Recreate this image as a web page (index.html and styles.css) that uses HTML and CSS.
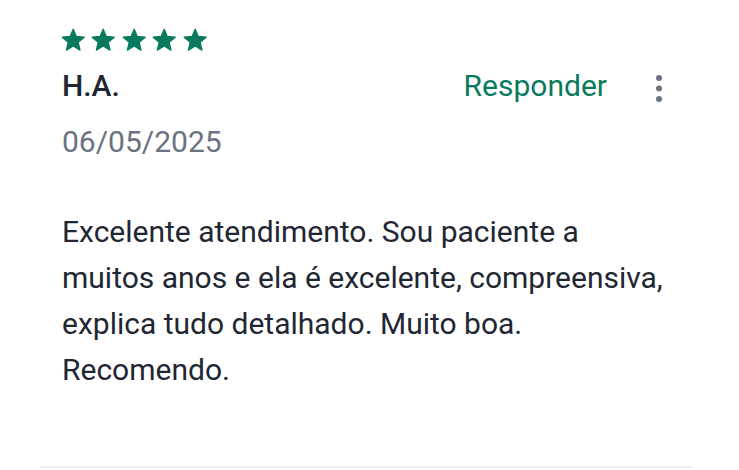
FILE: index.html
```html
<!DOCTYPE html>
<html lang="pt-BR">
  <head>
    <meta charset="UTF-8" />
    <meta name="viewport" content="width=device-width, initial-scale=1.0" />
    <title>Avaliação</title>
    <link rel="stylesheet" href="styles.css">
  </head>
  <body>
    <div class="review">
      <div class="stars">
        <svg class="star" viewBox="0 0 24 24"><path d="M12 17.27L18.18 21l-1.64-7.03L22 9.24l-7.19-.61L12 2 9.19 8.63 2 9.24l5.46 4.73L5.82 21z"/></svg>
        <svg class="star" viewBox="0 0 24 24"><path d="M12 17.27L18.18 21l-1.64-7.03L22 9.24l-7.19-.61L12 2 9.19 8.63 2 9.24l5.46 4.73L5.82 21z"/></svg>
        <svg class="star" viewBox="0 0 24 24"><path d="M12 17.27L18.18 21l-1.64-7.03L22 9.24l-7.19-.61L12 2 9.19 8.63 2 9.24l5.46 4.73L5.82 21z"/></svg>
        <svg class="star" viewBox="0 0 24 24"><path d="M12 17.27L18.18 21l-1.64-7.03L22 9.24l-7.19-.61L12 2 9.19 8.63 2 9.24l5.46 4.73L5.82 21z"/></svg>
        <svg class="star" viewBox="0 0 24 24"><path d="M12 17.27L18.18 21l-1.64-7.03L22 9.24l-7.19-.61L12 2 9.19 8.63 2 9.24l5.46 4.73L5.82 21z"/></svg>
      </div>

      <div class="head">
        <p class="name">H.A.</p>
        <button class="reply-button">Responder</button>
        <button class="more-button" aria-label="Mais opções">
          <svg viewBox="0 0 24 24"><circle cx="12" cy="4" r="3"/><circle cx="12" cy="14.5" r="3"/><circle cx="12" cy="25" r="3"/></svg>
        </button>
      </div>

      <p class="date">06/05/2025</p>

      <p class="text">
        Excelente atendimento. Sou paciente a muitos anos e ela é excelente, compreensiva, explica tudo detalhado. Muito boa. Recomendo.
      </p>
    </div>
  </body>
</html>
```

FILE: styles.css
```css
body {
  margin: 0;
  background-color: white;
  font-family: Roboto, "Liberation Sans", Arial, sans-serif;
  color: #1f2733;
}

.review {
  margin: 0 46px 0 41px;
  padding: 27px 21px 73px 19px;
  border-bottom: 2px solid #eef0f2;
}

.stars {
  display: flex;
  gap: 4px;
  height: 26px;
}

.star {
  width: 26.4px;
  height: 26.4px;
  fill: #0a7a5e;
  stroke: #0a7a5e;
  stroke-width: 1.2;
  stroke-linejoin: round;
}

.head {
  display: flex;
  align-items: center;
  margin-top: 15px;
  margin-left: 2px;
  height: 36px;
}

.name {
  flex: 1;
  margin: 0;
  font-size: 30px;
  line-height: 36px;
  font-weight: 500;
  color: #1f2733;
}

.reply-button {
  background: none;
  border: none;
  padding: 0;
  font-family: Roboto, "Liberation Sans", Arial, sans-serif;
  font-size: 30px;
  line-height: 36px;
  color: #0a7a5e;
  margin-right: 40px;
  cursor: pointer;
}

.more-button {
  background: none;
  border: none;
  padding: 0;
  width: 24px;
  height: 28px;
  margin-right: 1px;
  cursor: pointer;
}

.more-button svg {
  width: 24px;
  height: 28px;
  fill: #6b7280;
  overflow: visible;
}

.date {
  margin: 20px 0 0 2px;
  font-size: 30px;
  line-height: 36px;
  color: #6b7280;
}

.text {
  margin: 49px 0 0 2px;
  font-size: 30px;
  line-height: 46px;
  color: #1f2733;
  max-width: 620px;
}
```
